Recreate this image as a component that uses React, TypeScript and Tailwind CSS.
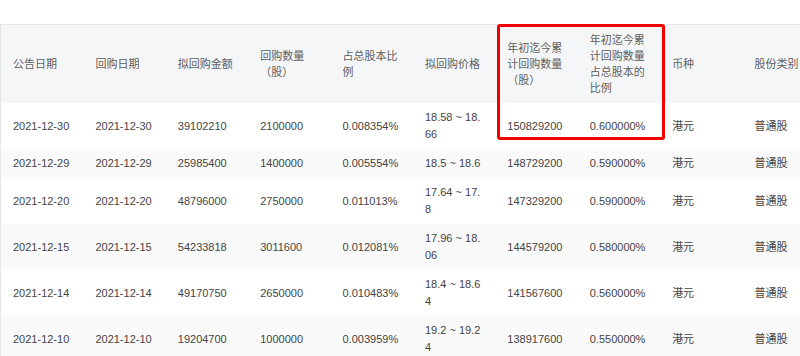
import React from "react";

type Row = {
  notice: string;
  buyback: string;
  amount: string;
  qty: string;
  ratio: string;
  price: string;
  ytdQty: string;
  ytdRatio: string;
  currency: string;
  shareType: string;
};

const headers = [
  "公告日期",
  "回购日期",
  "拟回购金额",
  "回购数量（股）",
  "占总股本比例",
  "拟回购价格",
  "年初迄今累计回购数量（股）",
  "年初迄今累计回购数量占总股本的比例",
  "币种",
  "股份类别",
];

const rows: Row[] = [
  { notice: "2021-12-30", buyback: "2021-12-30", amount: "39102210", qty: "2100000", ratio: "0.008354%", price: "18.58 ~ 18.66", ytdQty: "150829200", ytdRatio: "0.600000%", currency: "港元", shareType: "普通股" },
  { notice: "2021-12-29", buyback: "2021-12-29", amount: "25985400", qty: "1400000", ratio: "0.005554%", price: "18.5 ~ 18.6", ytdQty: "148729200", ytdRatio: "0.590000%", currency: "港元", shareType: "普通股" },
  { notice: "2021-12-20", buyback: "2021-12-20", amount: "48796000", qty: "2750000", ratio: "0.011013%", price: "17.64 ~ 17.8", ytdQty: "147329200", ytdRatio: "0.590000%", currency: "港元", shareType: "普通股" },
  { notice: "2021-12-15", buyback: "2021-12-15", amount: "54233818", qty: "3011600", ratio: "0.012081%", price: "17.96 ~ 18.06", ytdQty: "144579200", ytdRatio: "0.580000%", currency: "港元", shareType: "普通股" },
  { notice: "2021-12-14", buyback: "2021-12-14", amount: "49170750", qty: "2650000", ratio: "0.010483%", price: "18.4 ~ 18.64", ytdQty: "141567600", ytdRatio: "0.560000%", currency: "港元", shareType: "普通股" },
  { notice: "2021-12-10", buyback: "2021-12-10", amount: "19204700", qty: "1000000", ratio: "0.003959%", price: "19.2 ~ 19.24", ytdQty: "138917600", ytdRatio: "0.550000%", currency: "港元", shareType: "普通股" },
];

export default function App() {
  return (
    <div className="w-[800px] h-[356px] bg-white overflow-hidden relative font-['Liberation_Sans','Noto_Sans_CJK_SC',sans-serif] text-[11px]">
      <div className="mt-[24px] border-t border-l border-[#e6e6e6] overflow-hidden">
        <table className="table-fixed border-collapse w-[824px]">
          <colgroup>
            {headers.map((h) => (
              <col key={h} className="w-[82.4px]" />
            ))}
          </colgroup>
          <thead>
            <tr className="bg-[#f5f6f7] h-[78px]">
              {headers.map((h) => (
                <th
                  key={h}
                  className="px-3 py-[7px] text-left font-normal text-[#606060] leading-[16px] align-middle"
                >
                  {h}
                </th>
              ))}
            </tr>
          </thead>
          <tbody>
            {rows.map((r, i) => (
              <tr key={r.notice} className={i % 2 === 1 ? "bg-[#fafafa]" : "bg-white"}>
                {[r.notice, r.buyback, r.amount, r.qty, r.ratio, r.price, r.ytdQty, r.ytdRatio, r.currency, r.shareType].map((v, j) => (
                  <td
                    key={j}
                    className="px-3 py-[6px] text-left text-[#444] leading-[17px] align-middle break-all"
                  >
                    {v}
                  </td>
                ))}
              </tr>
            ))}
          </tbody>
        </table>
      </div>

      {/* highlight around the year-to-date columns */}
      <div className="absolute left-[497px] top-[24px] w-[168px] h-[116px] border-[3px] border-[#f20000] rounded-[3px] pointer-events-none" />
    </div>
  );
}
